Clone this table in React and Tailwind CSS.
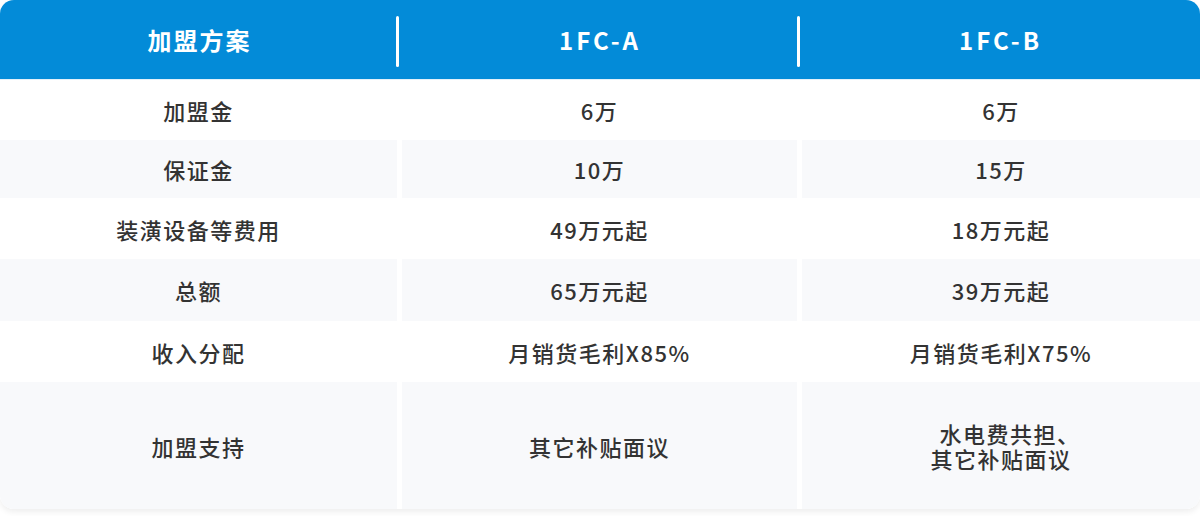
const rows = [
  { label: "加盟金", a: "6万", b: "6万", h: "h-[60px]", gray: false },
  { label: "保证金", a: "10万", b: "15万", h: "h-[58px]", gray: true },
  { label: "装潢设备等费用", a: "49万元起", b: "18万元起", h: "h-[61px]", gray: false },
  { label: "总额", a: "65万元起", b: "39万元起", h: "h-[62px]", gray: true },
  { label: "收入分配", a: "月销货毛利X85%", b: "月销货毛利X75%", h: "h-[61px]", gray: false },
  { label: "加盟支持", a: "其它补贴面议", b: ["水电费共担、", "其它补贴面议"], h: "h-[127px]", gray: true },
];

const font = {
  fontFamily: '"Noto Sans CJK SC", "Noto Sans", sans-serif',
};

function Cell({ children, gray }) {
  return (
    <div
      className={`flex items-center justify-center text-center text-[22px] font-medium tracking-[1.5px] leading-[28px] text-[#333333] ${
        gray ? "bg-[#f8f9fb]" : "bg-white"
      }`}
    >
      {Array.isArray(children) ? (
        <div className="flex flex-col items-center">
          <div className="pl-[18px] leading-[25px]">{children[0]}</div>
          <div className="leading-[25px]">{children[1]}</div>
        </div>
      ) : (
        children
      )}
    </div>
  );
}

export default function App() {
  return (
    <div className="w-[1200px] h-[516px] bg-white" style={font}>
      <div className="rounded-[14px] overflow-hidden shadow-[0_3px_6px_rgba(0,0,0,0.07)]">
        <div className="h-[79px] bg-[#038bd8] grid grid-cols-[399px_402px_399px] items-center text-white text-[24px] font-bold">
          <div className="relative h-full flex items-center justify-center tracking-[2px]">
            加盟方案
            <span className="absolute right-0 top-[16px] h-[51px] w-[3px] rounded-full bg-white" />
          </div>
          <div className="relative h-full flex items-center justify-center tracking-[3px]">
            1FC-A
            <span className="absolute right-[1px] top-[16px] h-[51px] w-[3px] rounded-full bg-white" />
          </div>
          <div className="h-full flex items-center justify-center tracking-[3px]">1FC-B</div>
        </div>
        <div className="h-px bg-[#e3f1fa]" />
        {rows.map((r) => (
          <div
            key={r.label}
            className={`grid grid-cols-[397px_395px_398px] gap-x-[5px] ${r.h} bg-white`}
          >
            <Cell gray={r.gray}>{r.label}</Cell>
            <Cell gray={r.gray}>{r.a}</Cell>
            <Cell gray={r.gray}>{r.b}</Cell>
          </div>
        ))}
      </div>
    </div>
  );
}
